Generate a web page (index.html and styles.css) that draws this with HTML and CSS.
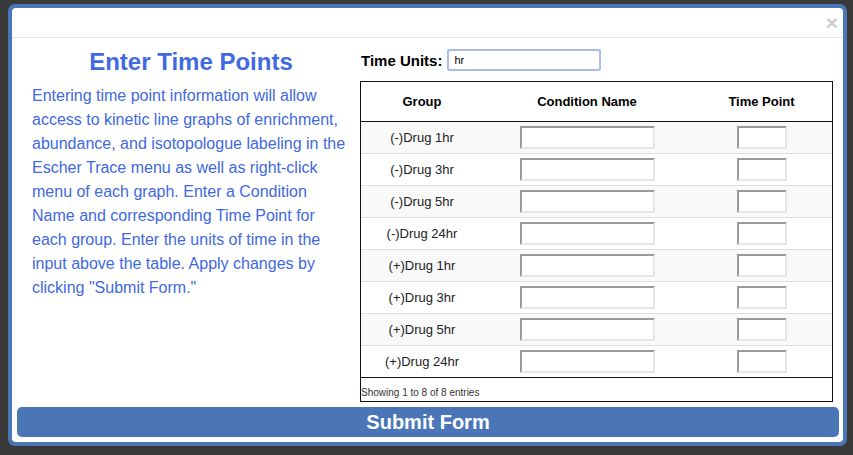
FILE: index.html
```html
<!DOCTYPE html>
<html>
  <head>
    <title>Enter Time Points</title>
    <link rel="stylesheet" href="styles.css">
  </head>

  <body>
    <div class="modal">
      <div class="modal-content">
        <div class="modal-header">
          <button type="button" class="close">&times;</button>
        </div>

        <div class="modal-body">
          <div class="intro">
            <h2 class="intro-title">Enter Time Points</h2>
            <p class="intro-text">
              Entering time point information will allow access to kinetic line graphs of enrichment,
              abundance, and isotopologue labeling in the Escher Trace menu as well as right-click
              menu of each graph. Enter a Condition Name and corresponding Time Point for each group.
              Enter the units of time in the input above the table. Apply changes by clicking
              "Submit Form."
            </p>
          </div>

          <div class="time-form">
            <div class="units-row">
              <label for="time-units">Time Units:</label>
              <input type="text" id="time-units" value="hr" autofocus>
            </div>

            <div class="table-wrapper">
              <table id="time-table">
                <thead>
                  <tr>
                    <th class="col-group">Group</th>
                    <th class="col-condition">Condition Name</th>
                    <th class="col-time">Time Point</th>
                  </tr>
                </thead>
                <tbody>
                  <tr>
                    <td>(-)Drug 1hr</td>
                    <td><input type="text" class="condition-input"></td>
                    <td><input type="text" class="time-input"></td>
                  </tr>
                  <tr>
                    <td>(-)Drug 3hr</td>
                    <td><input type="text" class="condition-input"></td>
                    <td><input type="text" class="time-input"></td>
                  </tr>
                  <tr>
                    <td>(-)Drug 5hr</td>
                    <td><input type="text" class="condition-input"></td>
                    <td><input type="text" class="time-input"></td>
                  </tr>
                  <tr>
                    <td>(-)Drug 24hr</td>
                    <td><input type="text" class="condition-input"></td>
                    <td><input type="text" class="time-input"></td>
                  </tr>
                  <tr>
                    <td>(+)Drug 1hr</td>
                    <td><input type="text" class="condition-input"></td>
                    <td><input type="text" class="time-input"></td>
                  </tr>
                  <tr>
                    <td>(+)Drug 3hr</td>
                    <td><input type="text" class="condition-input"></td>
                    <td><input type="text" class="time-input"></td>
                  </tr>
                  <tr>
                    <td>(+)Drug 5hr</td>
                    <td><input type="text" class="condition-input"></td>
                    <td><input type="text" class="time-input"></td>
                  </tr>
                  <tr>
                    <td>(+)Drug 24hr</td>
                    <td><input type="text" class="condition-input"></td>
                    <td><input type="text" class="time-input"></td>
                  </tr>
                </tbody>
              </table>
              <div class="table-info">Showing 1 to 8 of 8 entries</div>
            </div>
          </div>
        </div>

        <div class="modal-footer">
          <button type="button" id="submit-button">Submit Form</button>
        </div>
      </div>
    </div>
  </body>
</html>
```

FILE: styles.css
```css
body {
  margin: 0;
  background-color: #393939;
  font-family: 'Liberation Sans', Arial, sans-serif;
  color: #000000;
}

/* dialog frame */
.modal {
  width: 831px;
  margin: 4px 0 0 8px;
  padding: 4px;
  background-color: #4a76b8;
  border-radius: 7px;
}

.modal-content {
  background-color: #ffffff;
  border-radius: 4px;
}

.modal-header {
  height: 29px;
  border-bottom: 1px solid #e5e5e5;
  display: flex;
  align-items: center;
  justify-content: flex-end;
  padding-right: 5px;
}

.close {
  padding: 0;
  border: none;
  background: none;
  font-family: 'Liberation Sans', Arial, sans-serif;
  font-size: 21px;
  font-weight: bold;
  line-height: 1;
  color: #000;
  opacity: 0.2;
  cursor: pointer;
}

.modal-body {
  display: flex;
  gap: 10px;
  padding: 11px 10px 0 20px;
}

/* left column */
.intro {
  width: 318px;
  color: royalblue;
}

.intro-title {
  margin: 0;
  font-size: 24px;
  line-height: 26px;
  text-align: center;
}

.intro-text {
  margin: 9px 0 0 0;
  font-size: 16px;
  line-height: 24px;
}

/* right column */
.time-form {
  width: 473px;
}

.units-row {
  display: flex;
  align-items: center;
  height: 22px;
  margin-bottom: 10px;
}

.units-row label {
  font-size: 15px;
  font-weight: bold;
  padding-left: 1px;
  margin-right: 5px;
}

#time-units {
  box-sizing: border-box;
  width: 154px;
  height: 22px;
  padding: 0 5px;
  border: 2px solid #a9bbe9;
  border-radius: 2px;
  font-family: 'Liberation Sans', Arial, sans-serif;
  font-size: 11px;
  outline: none;
}

.table-wrapper {
  border: 1px solid #111;
}

#time-table {
  width: 100%;
  border-collapse: collapse;
  font-size: 13px;
}

#time-table th {
  height: 39px;
  padding: 0;
  border-bottom: 1px solid #111;
  font-weight: bold;
  text-align: center;
}

.col-group {
  width: 122px;
}

.col-condition {
  width: 208px;
}

#time-table td {
  height: 31px;
  padding: 0;
  border-bottom: 1px solid #ddd;
  text-align: center;
  vertical-align: middle;
  color: #222;
}

#time-table tbody tr:nth-child(odd) {
  background-color: #f9f9f9;
}

#time-table tbody tr:last-child td {
  border-bottom: 1px solid #111;
}

.condition-input,
.time-input {
  box-sizing: border-box;
  display: block;
  height: 23px;
  margin: 0 auto;
  padding: 0 3px;
  border-style: solid;
  border-width: 2px;
  border-color: #9a9a9a #e6e6e6 #e6e6e6 #9a9a9a;
  border-radius: 0;
  background-color: #ffffff;
}

.condition-input {
  width: 135px;
}

.time-input {
  width: 50px;
}

.table-info {
  height: 23px;
  box-sizing: border-box;
  padding-top: 9px;
  font-size: 10px;
  line-height: 12px;
  color: #333;
}

/* footer */
.modal-footer {
  padding: 5px 4px 5px 5px;
}

#submit-button {
  display: block;
  width: 100%;
  height: 30px;
  padding: 0;
  border: none;
  border-radius: 5px;
  background-color: #4a76b8;
  color: #ffffff;
  font-family: 'Liberation Sans', Arial, sans-serif;
  font-size: 20px;
  font-weight: bold;
  cursor: pointer;
}
```
